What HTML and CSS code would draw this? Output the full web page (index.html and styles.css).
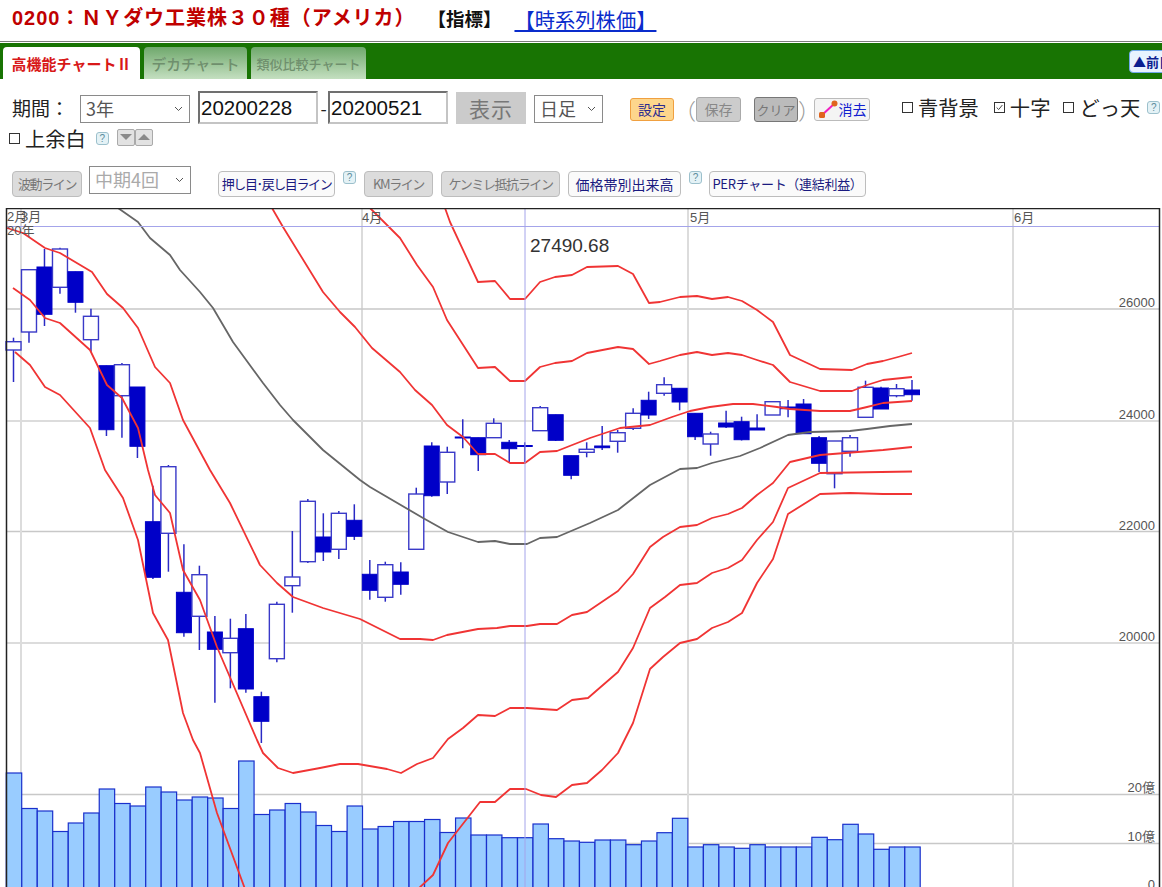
FILE: index.html
```html
<!DOCTYPE html>
<html lang="ja">
<head>
<meta charset="utf-8">
<title>NYダウ工業株30種 チャート</title>
<link rel="stylesheet" href="styles.css">
</head>
<body>
<header class="title-row">
  <h1 class="title">0200：ＮＹダウ工業株３０種（アメリカ）</h1>
  <span class="indicator">【指標】</span>
  <a class="series-link" href="#">【時系列株価】</a>
</header>
<nav class="tabbar">
  <span class="tab tab-active">高機能チャートⅡ</span>
  <span class="tab tab-idle tab-w103">デカチャート</span>
  <span class="tab tab-idle tab-w115">類似比較チャート</span>
  <a class="prev-btn" href="#">▲前日</a>
</nav>
<section class="controls">
  <div class="row row-one">
    <span class="period-label">期間：</span>
    <select class="sel sel-period"><option>3年</option></select>
    <input class="date" value="20200228">
    <span class="dash">-</span>
    <input class="date" value="20200521">
    <button class="show-btn">表示</button>
    <select class="sel sel-span"><option>日足</option></select>
    <button class="mini mini-set">設定</button>
    <span class="paren paren-open">（</span>
    <button class="mini mini-save">保存</button>
    <button class="mini mini-clear">クリア</button>
    <span class="paren">）</span>
    <button class="mini mini-erase">
      <svg class="erase-icon" viewBox="0 0 20 18" width="20" height="18"><path d="M4 15L16 4" stroke="#f020c0" stroke-width="2"/><rect x="1" y="12" width="6" height="6" rx="1.5" fill="#e0641e"/><circle cx="16.500" cy="3.500" r="3" fill="#e0641e"/></svg>
      消去
    </button>
    <label class="opt opt-blue"><span class="box"></span>青背景</label>
    <label class="opt opt-cross"><span class="box"><svg viewBox="0 0 11 11" width="9" height="9"><path d="M2 5.500L4.500 8L9 2.500" fill="none" stroke="#444" stroke-width="1.200"/></svg></span>十字</label>
    <label class="opt opt-top"><span class="box"></span>どっ天</label>
    <span class="help help-top">?</span>
  </div>
  <div class="row row-two">
    <label class="opt"><span class="box"></span>上余白</label>
    <span class="help help-margin">?</span>
    <span class="arrow arrow-down"></span>
    <span class="arrow arrow-up"></span>
  </div>
  <div class="row row-three">
    <button class="tool tool-off tight w70">波動ライン</button>
    <select class="sel sel-term" disabled><option>中期4回</option></select>
    <button class="tool tight w117 gap-27">押し目･戻し目ライン</button>
    <span class="help help-line">?</span>
    <button class="tool tool-off tight w69 gap-8">KMライン</button>
    <button class="tool tool-off tight w119 gap-8">ケンミレ抵抗ライン</button>
    <button class="tool w113 gap-8">価格帯別出来高</button>
    <span class="help help-line">?</span>
    <button class="tool w157 gap-7 tight-s">PERチャート（連結利益）</button>
  </div>
</section>
<svg class="chart" viewBox="0 208 1162 679" width="1162" height="679" xmlns="http://www.w3.org/2000/svg">
  <g class="grid-thin">
    <path d="M7 309H1159M7 531.500H1159M7 794.500H1159M7 843.500H1159"/>
    <path d="M362 209V887"/>
  </g>
  <g class="grid-wide">
    <path d="M7 421H1159M7 643H1159"/>
    <path d="M21 209V887M688 209V887M1013 209V887"/>
  </g>
  <g id="vols" class="vols"></g>
  <g id="candles"></g>
  <polyline class="avg" points="118,208 138,222 150,238 170,255 180,270 200,292 213,308 233,342 263,383 280,405 293,420 323,450 360,480 370,487 423,518 448,532 478,542 495,541 510,544 527,544 540,538 557,537 590,523 618,510 650,485 680,469 697,468 712,463 740,456 760,448 788,435 810,432 850,431 867,429 890,426 912,424"/>
  <polyline class="band" points="445,208 450,222 478,282 495,281 510,299 525,299 540,282 555,277 572,275 587,267 618,266 633,274 649,303 660,302 680,297 697,296 712,299 728,297 742,301 757,310 773,322 790,355 820,369 852,370 867,364 883,361 898,357 912,353"/>
  <polyline class="band" points="370,208 400,238 417,265 433,287 447,320 478,368 495,367 510,381 525,381 540,367 555,363 572,361 587,353 618,347 633,349 649,364 660,361 680,355 697,352 712,355 728,353 742,355 757,360 773,365 790,382 820,391 852,391 867,385 883,380 912,377"/>
  <polyline class="band" points="272,208 283,227 323,292 340,312 355,327 372,348 400,372 415,390 432,405 447,425 463,437 478,454 495,454 510,463 525,463 540,452 557,451 590,438 620,428 650,425 672,417 690,411 710,407 733,404 753,404 777,407 790,409 820,411 850,411 867,407 883,403 912,401"/>
  <polyline class="band" points="7,228 23,233 45,248 60,253 92,272 107,294 123,308 138,328 155,367 170,383 183,420 210,470 230,503 260,565 277,583 293,597 323,608 360,619 400,639 420,639 433,640 447,635 478,629 497,628 510,626 527,626 540,624 557,624 572,615 587,612 618,591 633,574 650,547 663,537 680,527 697,525 712,518 728,514 742,508 757,495 773,483 790,462 820,455 883,450 912,447"/>
  <polyline class="band" points="13,288 30,300 45,318 60,323 90,350 107,385 122,398 138,428 148,470 155,495 170,513 183,570 200,600 217,647 257,740 263,753 278,768 293,773 320,768 340,764 358,764 387,769 401,773 417,764 433,758 448,739 463,728 478,715 495,716 510,708 527,708 557,710 572,700 588,698 618,672 633,648 650,608 665,597 680,585 697,583 712,573 728,568 742,560 757,540 773,522 788,488 820,473 912,471.500"/>
  <polyline class="band" points="15,352 30,365 45,387 60,395 90,428 105,470 123,498 138,540 153,613 168,640 183,713 193,740 200,753 217,813 245,889"/>
  <polyline class="band" points="418,889 433,875 448,843 480,802 495,802 510,789 526,789 541,795 556,797 572,785 587,783 602,770 618,753 633,723 650,669 663,657 680,643 697,639 712,628 728,622 742,613 757,583 773,559 788,514 820,494 850,493 883,494 912,494"/>
  <path class="cross" d="M7 226.500H1159M525 209V887"/>
  <g class="axis">
    <text x="7" y="221">2月</text>
    <text x="21" y="221">3月</text>
    <text x="7" y="235">20年</text>
    <text x="362" y="222">4月</text>
    <text x="690" y="222">5月</text>
    <text x="1014" y="222">6月</text>
    <text x="1155" y="307" class="end">26000</text>
    <text x="1155" y="419" class="end">24000</text>
    <text x="1155" y="530" class="end">22000</text>
    <text x="1155" y="641" class="end">20000</text>
    <text x="1155" y="792" class="end">20億</text>
    <text x="1155" y="841" class="end">10億</text>
    <text x="1155" y="889" class="end">0</text>
  </g>
  <text class="price" x="530" y="252">27490.68</text>
  <path class="frame" d="M1159.500 887V208.500H6.500V887"/>
</svg>
<script src="script.js"></script>
</body>
</html>
```
FILE: styles.css
```css
* { box-sizing: border-box; }
html, body { margin: 0; padding: 0; background: #fff; overflow: hidden; }
body { font-family: "Noto Sans CJK JP", "Liberation Sans", sans-serif; width: 1162px; height: 887px; color: #222; }

.title-row { height: 41px; padding: 0 0 5px 12px; display: flex; align-items: center; }
.title { margin: 0; font-size: 20px; font-weight: 700; color: #c00000; line-height: 1; font-family: "Liberation Sans", "Noto Sans CJK JP", sans-serif; letter-spacing: 0.950px; white-space: nowrap; }
.indicator { margin-left: 12px; font-size: 18.500px; font-weight: 700; line-height: 1; color: #111; }
.series-link { margin-left: 13px; font-size: 20.300px; color: #0a2ccc; line-height: 1; padding-top: 2px; text-decoration: underline; }

.tabbar { height: 38px; border-top: 1px solid #7d7d7d; background: linear-gradient(#fff 0 1px, #187403 1px); padding: 5px 0 0 3px; display: flex; align-items: flex-end; gap: 4px; }
.tab { height: 32px; display: flex; align-items: center; justify-content: center; border-radius: 4px 4px 0 0; font-size: 14.700px; font-weight: 500; white-space: nowrap; }
.tab-active { width: 137px; background: #fff; color: #d81818; font-size: 15px; font-weight: 700; }
.tab-idle { background: linear-gradient(#6fa86c, #c4dfc0); color: #6f8f6d; }
.tab-w103 { width: 103px; }
.tab-w115 { width: 115px; font-size: 13px; }
.prev-btn { margin: 0 -14px 6px auto; width: 47px; height: 23px; border: 1px solid #6fa8e8; border-radius: 4px; background: #e8f3ff; color: #0a2090; font-size: 13px; font-weight: 700; text-decoration: none; display: flex; align-items: center; justify-content: center; white-space: nowrap; }

.controls { height: 129px; padding-top: 12px; }
.row { display: flex; align-items: center; }
.row-one { height: 33px; padding-left: 12px; }
.row-two { height: 20px; margin-top: 4px; padding-left: 9px; }
.row-three { height: 31px; margin-top: 18px; padding-left: 12px; }

.period-label { font-size: 19px; width: 68px; line-height: 1; }
.sel { appearance: none; -webkit-appearance: none; height: 28px; border: 1px solid #8a8a8a; background: #fff url("data:image/svg+xml;utf8,<svg xmlns='http://www.w3.org/2000/svg' width='9' height='6'><path d='M1 1l3.500 3.500L8 1' fill='none' stroke='%23555' stroke-width='1'/></svg>") no-repeat right 6px center; color: #555; font-family: inherit; font-size: 18px; line-height: 24px; padding: 0 0 2px 5px; border-radius: 0; }
.sel-period { width: 110px; margin-top: 3px; }
.sel-span { width: 69px; margin: 3px 0 0 8px; }
.sel-term { width: 102px; margin: -4px 0 0 7px; color: #aaa; opacity: 1; }
.date { width: 120px; height: 33px; border: 2px inset #c4c4c4; font-family: "Liberation Sans", sans-serif; font-size: 20.500px; color: #111; padding: 0 1px; margin-left: 8px; }
.date + .dash { width: 9px; margin-left: 1px; text-align: center; font-size: 18px; }
.dash + .date { margin-left: 0; }
.show-btn { width: 70px; height: 32px; margin-left: 8px; border: 0; background: #cbcbcb; color: #777; font-family: inherit; font-size: 21px; letter-spacing: 1px; padding: 0; }

.mini { height: 23px; margin-top: 3px; padding: 0; border-radius: 3px; font-family: inherit; font-size: 14px; display: flex; align-items: center; justify-content: center; white-space: nowrap; }
.mini-set { width: 44px; margin-left: 27px; border: 1px solid #f0a040; background: #fdd68c; color: #2a2a90; }
.mini-save { width: 45px; height: 25px; border: 1px solid #aaa; background: #ccc; color: #888; margin-left: 0; }
.mini-clear { width: 44px; height: 25px; margin-left: 13px; border: 1px solid #777; background: #bbb; color: #777; font-size: 13px; }
.mini-erase { width: 56px; margin-left: 7px; border: 1px solid #bbb; background: #f4f4f4; color: #1020d0; gap: 1px; }
.erase-icon { flex: none; }
.paren { font-size: 22px; font-weight: 300; color: #999; width: 9px; line-height: 1; margin-top: 2px; white-space: nowrap; }
.paren-open { width: 13px; margin-left: 9px; text-indent: -9px; }

.opt { display: inline-flex; align-items: center; font-size: 20.300px; line-height: 1; white-space: nowrap; color: #222; }
.box { width: 11px; height: 11px; margin-right: 5px; border: 1px solid #333; display: inline-flex; align-items: center; justify-content: center; flex: none; background: #fff; }
.opt-blue { margin-left: 32px; }
.opt-cross { margin-left: 15px; }
.opt-top { margin-left: 13px; }
.help { width: 13px; height: 13px; border: 1px solid #9cc0cc; border-radius: 3px; background: #e4f2f6; color: #5c8c9c; font: 10px/11px "Liberation Sans", sans-serif; text-align: center; flex: none; }
.help-top { margin-left: 7px; }
.help-margin { margin-left: 10px; }
.help-line { margin: -8px 0 0 8px; }
.arrow { width: 18px; height: 17px; margin-top: -2px; border: 1px solid #aaa; border-radius: 2px; background: #e2e2e2; display: flex; align-items: center; justify-content: center; }
.arrow::before { content: ""; border-left: 6px solid transparent; border-right: 6px solid transparent; }
.arrow-down { margin-left: 8px; }
.arrow-down::before { border-top: 6px solid #8a8a8a; }
.arrow-up::before { border-bottom: 6px solid #8a8a8a; }

.tool { height: 26px; margin-top: 4px; padding: 0; border: 1px solid #bdbdbd; border-radius: 4px; background: #fafafa; color: #1a1a80; font-family: inherit; font-size: 14px; white-space: nowrap; }
.tool-off { background: #dcdcdc; color: #777; }
.tight { font-size: 13px; letter-spacing: -1.400px; }
.tight-s { font-size: 13px; letter-spacing: -0.300px; }
.w69 { width: 69px; }
.w70 { width: 70px; }
.w113 { width: 113px; }
.w117 { width: 117px; }
.w119 { width: 119px; }
.w157 { width: 157px; }
.gap-7 { margin-left: 7px; }
.gap-8 { margin-left: 8px; }
.gap-27 { margin-left: 27px; }

.chart { display: block; }
.grid-thin path { fill: none; stroke: #c8c8c8; stroke-width: 1.300; }
.grid-wide path { fill: none; stroke: #dcdcdc; stroke-width: 2; }
.vols rect { fill: #99ccff; stroke: #1a30cc; stroke-width: 1.200; }
.wick { stroke: #2a2ac4; stroke-width: 1.500; }
.body-up { fill: #fff; stroke: #3a3ac8; stroke-width: 1.400; }
.body-down { fill: #0000c8; stroke: #0000c8; stroke-width: 1; }
.band { fill: none; stroke: #f03434; stroke-width: 1.800; stroke-linejoin: round; }
.avg { fill: none; stroke: #666; stroke-width: 1.800; stroke-linejoin: round; }
.cross { fill: none; stroke: #a4a4ea; stroke-width: 1; }
.axis text { font-family: "Liberation Sans", "Noto Sans CJK JP", sans-serif; font-size: 13px; fill: #555; }
.axis .end { text-anchor: end; }
.price { font-family: "Liberation Sans", sans-serif; font-size: 19px; fill: #333; }
.frame { fill: none; stroke: #222; stroke-width: 1.500; }
```
FILE: script.js
```js
var SVG_NS = "http://www.w3.org/2000/svg";
var STEP = (912 - 13.5) / 58;

// [wick top, wick bottom, body top, body bottom, filled]
var candles = [
  [337.7,382,341.7,350,0],[269.7,342.7,269.7,332,0],[249,326,267,314.3,1],[247.7,293.7,249,287.3,0],
  [271.7,312.7,271.7,302.3,1],[308.7,351.7,316.3,339.7,0],[365.7,436,365.7,429.7,1],[363,437.7,364.7,395.7,0],
  [387,458,387,446.3,1],[485.7,579,521.7,577.3,1],[465,571.7,466.7,533.3,0],[544.3,636.7,592.3,632.7,1],
  [565.7,650,574.7,616.3,0],[616,702.7,632,649.3,1],[618.7,688.3,638.3,652.7,0],[614,692.7,628.7,689,1],
  [691.7,743,696.7,721.3,1],[601.7,662.3,604.3,658.7,0],[531,612.7,577,585.7,0],[499,563,501.3,561.7,0],
  [513.3,561,537,552,1],[511,559,513.3,549.3,0],[504.3,540,520.3,536.3,1],[560,599.7,574.3,590.3,1],
  [561.7,601.7,564.7,597.3,0],[562.3,594.7,572,584.3,1],[487.7,549.3,494,549.3,0],[442.3,496.7,446,495.7,1],
  [446.7,494,452.3,482,0],[419.3,448.3,437,438,1],[437.7,471,437.7,454.7,1],[418.3,437.7,423.3,437.7,0],
  [440,462.7,442.3,448.7,1],[442.3,462.7,445.5,446.5,1],[406,430.7,407.7,430.7,0],[414.7,441,414.7,440.3,1],
  [455.7,479.3,455.7,475.3,1],[442.3,457.3,449.3,452.3,0],[426,450,446,447.7,1],[430,452.7,432.7,441.3,0],
  [408.3,430,413.3,428.3,0],[391.7,419,400.3,415,1],[377.3,395.7,384.7,393.3,0],[388.3,410.3,388.3,402,1],
  [413.3,440,413.3,436.7,1],[431.7,455.7,434,444,0],[410.7,428,423,427,1],[416.7,440.5,421.7,439.7,1],
  [414.3,430,428,430,1],[401.7,415,401.7,415,0],[400,417.3,407,408.7,1],[399,433.7,404,433.7,1],
  [436,472,437.7,463.3,1],[441,488.3,441,473.7,0],[435,456.7,437.7,451.3,0],[380.7,417.3,387.3,417.3,0],
  [386.7,409,388,409,1],[384,397.3,388.7,395.7,0],[380,400.7,390,394.7,1]
];

var volumes = [
  773,808.5,811,831.5,823,813,789,803.5,806,787,792,800,797,798,808.5,761,814.5,810,803.5,812,
  825.5,831.5,806,829,826.5,821.5,821.5,819.5,832.5,818,835,835,837.7,837.7,824,838.7,841,842.3,840,840,
  844.7,841,832.7,818.3,847,844.7,847,848.3,844.7,847,847,847,837.3,839.7,824.3,834,849.3,847,847
];

function make(tag, attrs) {
  var el = document.createElementNS(SVG_NS, tag);
  Object.keys(attrs).forEach(function (k) { el.setAttribute(k, attrs[k]); });
  return el;
}

var volGroup = document.getElementById("vols");
volumes.forEach(function (top, i) {
  var cx = 14 + i * STEP;
  volGroup.appendChild(make("rect", { x: cx - 7.7, y: top, width: 15.4, height: 900 - top }));
});

var candleGroup = document.getElementById("candles");
candles.forEach(function (c, i) {
  var cx = 13.5 + i * STEP;
  candleGroup.appendChild(make("line", { x1: cx, x2: cx, y1: c[0], y2: c[1], "class": "wick" }));
  candleGroup.appendChild(make("rect", {
    x: cx - 7.5, y: c[2], width: 15, height: Math.max(c[3] - c[2], 0.5),
    "class": c[4] ? "body-down" : "body-up"
  }));
});
```
